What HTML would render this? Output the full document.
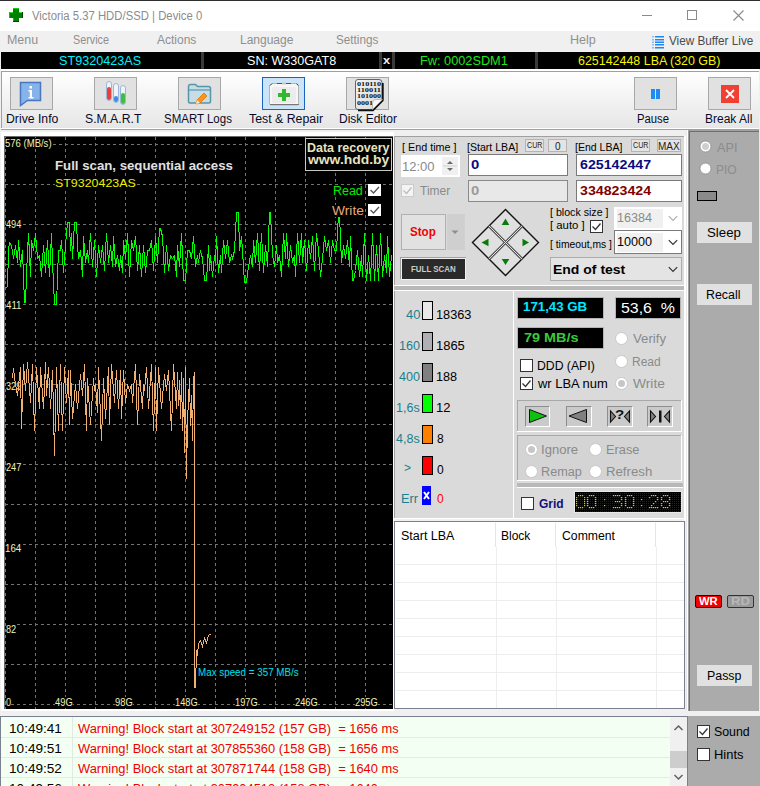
<!DOCTYPE html>
<html><head><meta charset="utf-8"><title>Victoria</title>
<style>
html,body{margin:0;padding:0;width:760px;height:786px;overflow:hidden;background:#f0f0f0;}
.a{position:absolute;}
.t{white-space:pre;transform-origin:0 0;font-family:"Liberation Sans",sans-serif;}
svg.a{overflow:visible}
</style></head><body>
<div class='a' style='left:0px;top:0px;width:760px;height:1px;background:#2e2e2e;'></div>
<div class='a' style='left:0px;top:1px;width:760px;height:30px;background:#ffffff;'></div>
<svg class='a' style='left:9px;top:8px' width='14' height='14' shape-rendering='crispEdges'><rect x='4' y='0' width='6' height='14' fill='#008000'/><rect x='0' y='4' width='14' height='6' fill='#008000'/><rect x='4' y='0' width='6' height='1' fill='#10d010'/><rect x='0' y='4' width='4' height='1' fill='#30e030'/><rect x='10' y='4' width='4' height='1' fill='#30e030'/><rect x='0' y='4' width='1' height='6' fill='#10c010'/><rect x='4' y='10' width='1' height='4' fill='#10c010'/><rect x='4' y='13' width='6' height='1' fill='#004000'/><rect x='13' y='4' width='1' height='6' fill='#004000'/></svg>
<div class='a t' style='left:32.00px;top:10px;font:normal normal 12px/1 "Liberation Sans", sans-serif;color:#8c8c8c;transform:scaleX(0.9444);'>Victoria 5.37 HDD/SSD | Device 0</div>
<div class='a' style='left:642px;top:15px;width:10px;height:1px;background:#8a8a8a;'></div>
<div class='a' style='left:687px;top:10px;width:10px;height:10px;box-sizing:border-box;border:1px solid #8a8a8a;'></div>
<svg class='a' style='left:733px;top:10px' width='11' height='11'><path d='M0.5 0.5L10.5 10.5M10.5 0.5L0.5 10.5' stroke='#8a8a8a' stroke-width='1.1'/></svg>
<div class='a' style='left:0px;top:31px;width:760px;height:21px;background:#f0f0f0;'></div>
<div class='a t' style='left:6.96px;top:34px;font:normal normal 12px/1 "Liberation Sans", sans-serif;color:#8f8f8f;transform:scaleX(1.0357);'>Menu</div>
<div class='a t' style='left:73.10px;top:34px;font:normal normal 12px/1 "Liberation Sans", sans-serif;color:#8f8f8f;transform:scaleX(0.8974);'>Service</div>
<div class='a t' style='left:157.00px;top:34px;font:normal normal 12px/1 "Liberation Sans", sans-serif;color:#8f8f8f;'>Actions</div>
<div class='a t' style='left:240.00px;top:34px;font:normal normal 12px/1 "Liberation Sans", sans-serif;color:#8f8f8f;'>Language</div>
<div class='a t' style='left:336.02px;top:34px;font:normal normal 12px/1 "Liberation Sans", sans-serif;color:#8f8f8f;transform:scaleX(0.9762);'>Settings</div>
<div class='a t' style='left:569.96px;top:34px;font:normal normal 12px/1 "Liberation Sans", sans-serif;color:#8f8f8f;transform:scaleX(1.0435);'>Help</div>
<svg class='a' style='left:652px;top:36px' width='12' height='12'><rect x='0' y='0' width='2' height='1.5' fill='#7fbfff'/><rect x='3' y='0' width='9' height='1.5' fill='#1e88f0'/><rect x='0' y='3' width='2' height='1.5' fill='#7fbfff'/><rect x='3' y='3' width='9' height='1.5' fill='#1e88f0'/><rect x='0' y='5.5' width='2' height='1.5' fill='#7fbfff'/><rect x='3' y='5.5' width='9' height='1.5' fill='#1e88f0'/><rect x='0' y='8' width='2' height='1.5' fill='#7fbfff'/><rect x='3' y='8' width='9' height='1.5' fill='#1e88f0'/><rect x='0' y='11' width='2' height='1.5' fill='#7fbfff'/><rect x='3' y='11' width='9' height='1.5' fill='#1e88f0'/></svg>
<div class='a t' style='left:669.00px;top:35px;font:normal normal 12px/1 "Liberation Sans", sans-serif;color:#4a4a4a;transform:scaleX(0.9767);'>View Buffer Live</div>
<div class='a' style='left:0px;top:52px;width:760px;height:17px;background:#f0f0f0;'></div>
<div class='a' style='left:1px;top:52px;width:759px;height:17px;background:#000;'></div>
<div class='a' style='left:201px;top:52px;width:3px;height:17px;background:#3a3a3a;'></div>
<div class='a' style='left:379px;top:52px;width:3px;height:17px;background:#3a3a3a;'></div>
<div class='a' style='left:392px;top:52px;width:3px;height:17px;background:#3a3a3a;'></div>
<div class='a' style='left:535px;top:52px;width:3px;height:17px;background:#3a3a3a;'></div>
<div class='a t' style='left:58.95px;top:55px;font:normal normal 12px/1 "Liberation Sans", sans-serif;color:#00f0ff;transform:scaleX(1.0519);'>ST9320423AS</div>
<div class='a t' style='left:246.95px;top:55px;font:normal normal 12px/1 "Liberation Sans", sans-serif;color:#ffffff;transform:scaleX(1.0476);'>SN: W330GAT8</div>
<div class='a t' style='left:383.00px;top:55px;font:normal bold 11px/1 "Liberation Sans", sans-serif;color:#f0f0f0;transform:scaleX(1.1667);'>x</div>
<div class='a t' style='left:419.94px;top:55px;font:normal normal 12px/1 "Liberation Sans", sans-serif;color:#1ee81e;transform:scaleX(1.0617);'>Fw: 0002SDM1</div>
<div class='a t' style='left:578.00px;top:55px;font:normal normal 12px/1 "Liberation Sans", sans-serif;color:#f5f500;transform:scaleX(1.0365);'>625142448 LBA (320 GB)</div>
<div class='a' style='left:0px;top:69px;width:760px;height:63px;background:#f0f0f0;'></div>
<div class='a' style='left:1px;top:69px;width:758px;height:2px;background:#ffffff;'></div>
<div class='a' style='left:1px;top:71px;width:758px;height:1px;background:#a0a0a0;'></div>
<div class='a' style='left:1px;top:72px;width:1px;height:56px;background:#a0a0a0;'></div>
<div class='a' style='left:2px;top:72px;width:757px;height:56px;background:linear-gradient(#ffffff,#e6e6e6)'></div>
<div class='a' style='left:1px;top:128px;width:758px;height:1px;background:#ffffff;'></div>
<div class='a' style='left:1px;top:129px;width:758px;height:1px;background:#a0a0a0;'></div>
<div class='a' style='left:10px;top:77px;width:43px;height:33px;background:#e1e1e1;box-sizing:border-box;border:1px solid #a8a8a8;'></div>
<div class='a t' style='left:5.98px;top:113px;font:normal normal 12px/1 "Liberation Sans", sans-serif;color:#0a0a28;transform:scaleX(1.0200);'>Drive Info</div>
<div class='a' style='left:94px;top:77px;width:43px;height:33px;background:#e1e1e1;box-sizing:border-box;border:1px solid #a8a8a8;'></div>
<div class='a t' style='left:84.98px;top:113px;font:normal normal 12px/1 "Liberation Sans", sans-serif;color:#0a0a28;transform:scaleX(1.0185);'>S.M.A.R.T</div>
<div class='a' style='left:178px;top:77px;width:43px;height:33px;background:#e1e1e1;box-sizing:border-box;border:1px solid #a8a8a8;'></div>
<div class='a t' style='left:164.04px;top:113px;font:normal normal 12px/1 "Liberation Sans", sans-serif;color:#0a0a28;transform:scaleX(0.9571);'>SMART Logs</div>
<div class='a' style='left:262px;top:77px;width:43px;height:33px;background:#cce4f7;box-sizing:border-box;border:1.5px solid #1a64c0;'></div>
<div class='a t' style='left:249.00px;top:113px;font:normal normal 12px/1 "Liberation Sans", sans-serif;color:#0a0a28;transform:scaleX(1.0278);'>Test &amp; Repair</div>
<div class='a' style='left:346px;top:77px;width:43px;height:33px;background:#e1e1e1;box-sizing:border-box;border:1px solid #a8a8a8;'></div>
<div class='a t' style='left:339.00px;top:113px;font:normal normal 12px/1 "Liberation Sans", sans-serif;color:#0a0a28;'>Disk Editor</div>
<div class='a' style='left:634px;top:77px;width:43px;height:33px;background:#e1e1e1;box-sizing:border-box;border:1px solid #a8a8a8;'></div>
<div class='a t' style='left:637.06px;top:113px;font:normal normal 12px/1 "Liberation Sans", sans-serif;color:#0a0a28;transform:scaleX(0.9394);'>Pause</div>
<div class='a' style='left:708px;top:77px;width:43px;height:33px;background:#e1e1e1;box-sizing:border-box;border:1px solid #a8a8a8;'></div>
<div class='a t' style='left:705.00px;top:113px;font:normal normal 12px/1 "Liberation Sans", sans-serif;color:#0a0a28;'>Break All</div>
<svg class='a' style='left:19px;top:81px' width='24' height='26'><path d='M1.5 1.5h20v18h-13l-7 5z' fill='#86b3ea' stroke='#4a78c0' stroke-width='1.5'/><rect x='10.5' y='5' width='2.5' height='2.5' fill='#fff'/><path d='M9.5 9h3.5v7h1.5v1.5h-5v-1.5h1.3v-5.5h-1.3z' fill='#fff'/></svg>
<svg class='a' style='left:105px;top:81px' width='23' height='26'><rect x='1.5' y='0.5' width='5' height='19' rx='2.5' fill='#eef4fb' stroke='#9bb7d6' stroke-width='1'/><rect x='2' y='6' width='4' height='13' rx='2' fill='#e84040'/><rect x='8.5' y='2.5' width='5' height='19' rx='2.5' fill='#eef4fb' stroke='#9bb7d6' stroke-width='1'/><rect x='9' y='15' width='4' height='6' rx='2' fill='#3c8ee8'/><rect x='15.5' y='4.5' width='5' height='19' rx='2.5' fill='#eef4fb' stroke='#9bb7d6' stroke-width='1'/><rect x='16' y='12' width='4' height='11' rx='2' fill='#3cc040'/></svg>
<svg class='a' style='left:187px;top:83px' width='26' height='23'><path d='M1.5 3.5q0-2 2-2h5l2 2h11q2 0 2 2v13q0 1.5-1.5 1.5h-19q-1.5 0-1.5-1.5z' fill='#c6dde6' stroke='#5795ad' stroke-width='1.5'/><path d='M1.5 7h22' stroke='#5795ad' stroke-width='1.2'/><path d='M17 10l3 3-7 7-4 1 1-4z' fill='#f7931e' stroke='#e07800' stroke-width='0.8'/><path d='M10 17l3 3-4 1z' fill='#e8e8e8'/></svg>
<svg class='a' style='left:268px;top:81px' width='33' height='27'><path d='M4 2.5h24l2.5 2.5v17.5q0 1.5-1.5 1.5h-26q-1.5 0-1.5-1.5v-17.5z' fill='#f6f6f6' stroke='#b4b4b4' stroke-width='1'/><path d='M2 4.5l2-2M30.5 4.5l-2-2' stroke='#444' stroke-width='1'/><path d='M9 2.5h5M18 2.5h5' stroke='#555' stroke-width='1.2'/><rect x='14' y='1.5' width='4' height='2' fill='#c8c8c8'/><rect x='4' y='6' width='24' height='16' rx='1.5' fill='#ececec'/><path d='M2 23.5h29' stroke='#777' stroke-width='1'/><path d='M14 8h4v4h4v4h-4v4h-4v-4h-4v-4h4z' fill='#30b830'/></svg>
<svg class='a' style='left:354px;top:78px' width='32' height='33'><defs><linearGradient id='dg' x1='0' y1='0' x2='1' y2='1'><stop offset='0' stop-color='#f6f6f6'/><stop offset='1' stop-color='#d6d6d6'/></linearGradient></defs><path d='M4 1.5h21q3 0 3 3v17.5l-9.5 9.5h-14.5q-2.5 0-2.5-2.5v-25q0-2.5 2.5-2.5z' fill='url(#dg)' stroke='#5a6478' stroke-width='1'/><path d='M28.8 5v17.5l-9.8 9.8h-15' fill='none' stroke='#111' stroke-width='1.8'/><text x='3' y='7.8' font-family='Liberation Serif' font-weight='bold' font-size='7' fill='#111' textLength='24' lengthAdjust='spacingAndGlyphs'>010110</text><text x='3' y='14.1' font-family='Liberation Serif' font-weight='bold' font-size='7' fill='#111' textLength='24' lengthAdjust='spacingAndGlyphs'>110011</text><text x='3' y='20.4' font-family='Liberation Serif' font-weight='bold' font-size='7' fill='#111' textLength='24' lengthAdjust='spacingAndGlyphs'>101000</text><text x='3' y='26.7' font-family='Liberation Serif' font-weight='bold' font-size='7' fill='#111' textLength='16' lengthAdjust='spacingAndGlyphs'>0001</text><path d='M18.5 31.5v-6.5q0-3.5 3.5-3.5h6.5z' fill='#f8f8f8' stroke='#9a9a9a' stroke-width='0.6'/></svg>
<div class='a' style='left:651px;top:89px;width:4px;height:10px;background:#1e8cf0;'></div>
<div class='a' style='left:656px;top:89px;width:4px;height:10px;background:#1e8cf0;'></div>
<div class='a' style='left:721px;top:85px;width:18px;height:18px;background:#f04034;'></div>
<svg class='a' style='left:721px;top:85px' width='18' height='18'><path d='M5 5L13 13M13 5L5 13' stroke='#fff' stroke-width='1.8'/></svg>
<div class='a' style='left:0px;top:130px;width:760px;height:586px;background:#f0f0f0;'></div>
<div class='a' style='left:1px;top:132px;width:393px;height:579px;background:#ffffff;'></div>
<div class='a' style='left:4px;top:136px;width:389px;height:1px;background:#6a6a6a;'></div>
<div class='a' style='left:4px;top:136px;width:1px;height:573px;background:#6a6a6a;'></div>
<div class='a' style='left:5px;top:137px;width:388px;height:572px;background:#000;'></div>
<svg class='a' style='left:0;top:0' width='393' height='709'><line x1='5' y1='144.5' x2='393' y2='144.5' stroke='#727272' stroke-width='1' stroke-dasharray='3 3'/><line x1='5' y1='184.5' x2='393' y2='184.5' stroke='#727272' stroke-width='1' stroke-dasharray='3 3'/><line x1='5' y1='224.5' x2='393' y2='224.5' stroke='#727272' stroke-width='1' stroke-dasharray='3 3'/><line x1='5' y1='264.5' x2='393' y2='264.5' stroke='#727272' stroke-width='1' stroke-dasharray='3 3'/><line x1='5' y1='304.5' x2='393' y2='304.5' stroke='#727272' stroke-width='1' stroke-dasharray='3 3'/><line x1='5' y1='344.5' x2='393' y2='344.5' stroke='#727272' stroke-width='1' stroke-dasharray='3 3'/><line x1='5' y1='384.5' x2='393' y2='384.5' stroke='#727272' stroke-width='1' stroke-dasharray='3 3'/><line x1='5' y1='424.5' x2='393' y2='424.5' stroke='#727272' stroke-width='1' stroke-dasharray='3 3'/><line x1='5' y1='464.5' x2='393' y2='464.5' stroke='#727272' stroke-width='1' stroke-dasharray='3 3'/><line x1='5' y1='504.5' x2='393' y2='504.5' stroke='#727272' stroke-width='1' stroke-dasharray='3 3'/><line x1='5' y1='544.5' x2='393' y2='544.5' stroke='#727272' stroke-width='1' stroke-dasharray='3 3'/><line x1='5' y1='584.5' x2='393' y2='584.5' stroke='#727272' stroke-width='1' stroke-dasharray='3 3'/><line x1='5' y1='624.5' x2='393' y2='624.5' stroke='#727272' stroke-width='1' stroke-dasharray='3 3'/><line x1='5' y1='664.5' x2='393' y2='664.5' stroke='#727272' stroke-width='1' stroke-dasharray='3 3'/><line x1='5' y1='704.5' x2='393' y2='704.5' stroke='#727272' stroke-width='1' stroke-dasharray='3 3'/><line x1='5.5' y1='137' x2='5.5' y2='709' stroke='#727272' stroke-width='1' stroke-dasharray='3 3'/><line x1='35.5' y1='137' x2='35.5' y2='709' stroke='#727272' stroke-width='1' stroke-dasharray='3 3'/><line x1='65.5' y1='137' x2='65.5' y2='709' stroke='#727272' stroke-width='1' stroke-dasharray='3 3'/><line x1='95.5' y1='137' x2='95.5' y2='709' stroke='#727272' stroke-width='1' stroke-dasharray='3 3'/><line x1='125.5' y1='137' x2='125.5' y2='709' stroke='#727272' stroke-width='1' stroke-dasharray='3 3'/><line x1='155.5' y1='137' x2='155.5' y2='709' stroke='#727272' stroke-width='1' stroke-dasharray='3 3'/><line x1='185.5' y1='137' x2='185.5' y2='709' stroke='#727272' stroke-width='1' stroke-dasharray='3 3'/><line x1='215.5' y1='137' x2='215.5' y2='709' stroke='#727272' stroke-width='1' stroke-dasharray='3 3'/><line x1='245.5' y1='137' x2='245.5' y2='709' stroke='#727272' stroke-width='1' stroke-dasharray='3 3'/><line x1='275.5' y1='137' x2='275.5' y2='709' stroke='#727272' stroke-width='1' stroke-dasharray='3 3'/><line x1='305.5' y1='137' x2='305.5' y2='709' stroke='#727272' stroke-width='1' stroke-dasharray='3 3'/><line x1='335.5' y1='137' x2='335.5' y2='709' stroke='#727272' stroke-width='1' stroke-dasharray='3 3'/><line x1='365.5' y1='137' x2='365.5' y2='709' stroke='#727272' stroke-width='1' stroke-dasharray='3 3'/></svg>
<div class='a t' style='left:5.13px;top:138px;font:normal normal 11px/1 "Liberation Sans", sans-serif;color:#f0f0b8;transform:scaleX(0.8654);background:#000;'>576 (MB/s)</div>
<div class='a t' style='left:6.00px;top:219px;font:normal normal 11px/1 "Liberation Sans", sans-serif;color:#f0f0b8;transform:scaleX(0.8333);background:#000;'>494</div>
<div class='a t' style='left:6.00px;top:300px;font:normal normal 11px/1 "Liberation Sans", sans-serif;color:#f0f0b8;transform:scaleX(0.8824);background:#000;'>411</div>
<div class='a t' style='left:6.00px;top:381px;font:normal normal 11px/1 "Liberation Sans", sans-serif;color:#f0f0b8;transform:scaleX(0.8333);background:#000;'>329</div>
<div class='a t' style='left:6.00px;top:462px;font:normal normal 11px/1 "Liberation Sans", sans-serif;color:#f0f0b8;transform:scaleX(0.8333);background:#000;'>247</div>
<div class='a t' style='left:5.12px;top:543px;font:normal normal 11px/1 "Liberation Sans", sans-serif;color:#f0f0b8;transform:scaleX(0.8824);background:#000;'>164</div>
<div class='a t' style='left:6.00px;top:624px;font:normal normal 11px/1 "Liberation Sans", sans-serif;color:#f0f0b8;transform:scaleX(0.8333);background:#000;'>82</div>
<svg class='a' style='left:0;top:0' width='393' height='709'><polyline shape-rendering='crispEdges' fill='none' stroke='#00ff00' stroke-width='1' points='5.5,288.5 7.5,286.5 8.5,250.5 9.5,242.5 11.5,245.5 13.5,258.5 15.5,245.5 17.5,262.5 18.5,240.5 20.5,266.5 22.5,250.5 24.5,302.5 25.5,302.5 27.5,250.5 28.5,233.5 30.5,276.5 31.5,240.5 33.5,250.5 35.5,233.5 37.5,258.5 39.5,255.5 41.5,276.5 43.5,245.5 45.5,272.5 47.5,240.5 49.5,276.5 51.5,233.5 52.5,262.5 54.5,304.5 56.5,304.5 58.5,250.5 60.5,250.5 61.5,240.5 63.5,272.5 65.5,245.5 67.5,222.5 69.5,222.5 70.5,250.5 71.5,233.5 72.5,258.5 74.5,222.5 76.5,222.5 77.5,245.5 78.5,258.5 80.5,250.5 82.5,276.5 83.5,236.5 85.5,262.5 87.5,250.5 88.5,262.5 90.5,233.5 92.5,266.5 94.5,240.5 96.5,276.5 98.5,245.5 100.5,262.5 102.5,245.5 104.5,270.5 106.5,233.5 108.5,262.5 110.5,245.5 112.5,266.5 113.5,236.5 115.5,266.5 117.5,255.5 119.5,270.5 120.5,255.5 122.5,272.5 123.5,240.5 125.5,258.5 127.5,233.5 129.5,276.5 131.5,240.5 133.5,250.5 135.5,236.5 137.5,270.5 139.5,245.5 141.5,276.5 143.5,245.5 145.5,272.5 147.5,250.5 149.5,250.5 151.5,240.5 153.5,270.5 155.5,236.5 157.5,262.5 159.5,228.5 160.5,228.5 162.5,236.5 164.5,272.5 166.5,245.5 168.5,270.5 170.5,255.5 172.5,258.5 174.5,255.5 176.5,276.5 177.5,245.5 179.5,266.5 181.5,233.5 183.5,280.5 185.5,280.5 187.5,250.5 189.5,250.5 191.5,258.5 193.5,236.5 195.5,266.5 197.5,255.5 198.5,262.5 200.5,250.5 202.5,258.5 204.5,280.5 206.5,280.5 208.5,245.5 209.5,270.5 210.5,255.5 212.5,276.5 214.5,255.5 215.5,262.5 216.5,236.5 218.5,272.5 220.5,255.5 221.5,272.5 223.5,240.5 225.5,258.5 227.5,240.5 229.5,262.5 231.5,255.5 232.5,258.5 234.5,250.5 236.5,212.5 238.5,212.5 239.5,250.5 241.5,236.5 243.5,266.5 244.5,282.5 245.5,282.5 246.5,282.5 248.5,266.5 250.5,255.5 252.5,266.5 253.5,240.5 255.5,262.5 257.5,233.5 259.5,270.5 261.5,233.5 263.5,272.5 265.5,245.5 267.5,266.5 269.5,212.5 270.5,212.5 272.5,255.5 274.5,266.5 276.5,245.5 277.5,262.5 279.5,255.5 281.5,276.5 283.5,233.5 285.5,258.5 286.5,233.5 288.5,266.5 290.5,245.5 292.5,262.5 294.5,255.5 295.5,276.5 297.5,233.5 299.5,262.5 301.5,233.5 302.5,262.5 304.5,240.5 306.5,270.5 308.5,240.5 310.5,258.5 312.5,236.5 314.5,270.5 316.5,233.5 318.5,250.5 320.5,276.5 322.5,258.5 324.5,236.5 326.5,250.5 328.5,240.5 330.5,262.5 332.5,240.5 334.5,250.5 336.5,250.5 338.5,214.5 339.5,214.5 341.5,262.5 343.5,245.5 345.5,258.5 347.5,240.5 349.5,266.5 350.5,236.5 352.5,280.5 353.5,280.5 355.5,270.5 357.5,250.5 359.5,276.5 361.5,255.5 362.5,276.5 364.5,233.5 366.5,280.5 368.5,255.5 370.5,280.5 372.5,233.5 374.5,280.5 376.5,245.5 378.5,280.5 380.5,233.5 382.5,276.5 384.5,255.5 386.5,272.5 387.5,236.5 389.5,276.5 391.5,255.5'/><polyline shape-rendering='crispEdges' fill='none' stroke='#f0b070' stroke-width='1' points='12.5,378.5 13.5,368.5 15.5,384.5 17.5,395.5 20.5,367.5 21.5,428.5 23.5,364.5 25.5,390.5 27.5,362.5 30.5,402.5 32.5,364.5 34.5,430.5 36.5,367.5 39.5,408.5 40.5,367.5 43.5,408.5 45.5,362.5 46.5,395.5 48.5,367.5 50.5,408.5 52.5,370.5 54.5,455.5 56.5,367.5 58.5,430.5 60.5,364.5 62.5,430.5 64.5,367.5 66.5,402.5 68.5,370.5 69.5,424.5 70.5,370.5 72.5,418.5 75.5,384.5 77.5,408.5 80.5,374.5 82.5,395.5 84.5,364.5 86.5,430.5 87.5,378.5 90.5,424.5 93.5,378.5 94.5,390.5 95.5,384.5 97.5,412.5 98.5,367.5 101.5,440.5 103.5,378.5 105.5,418.5 108.5,367.5 109.5,424.5 111.5,364.5 114.5,402.5 116.5,370.5 118.5,408.5 120.5,370.5 121.5,418.5 123.5,370.5 125.5,402.5 127.5,384.5 129.5,390.5 131.5,384.5 132.5,402.5 135.5,364.5 137.5,424.5 139.5,374.5 142.5,408.5 143.5,384.5 144.5,390.5 146.5,367.5 148.5,408.5 151.5,364.5 153.5,430.5 155.5,367.5 156.5,430.5 158.5,367.5 161.5,408.5 164.5,374.5 166.5,390.5 168.5,370.5 171.5,430.5 173.5,364.5 176.5,408.5 177.5,372.5 178.5,405.5 179.5,380.5 180.5,418.5 181.5,372.5 182.5,430.5 183.5,378.5 184.5,452.5 185.5,367.5 186.5,478.5 187.5,420.5 188.5,400.5 189.5,378.5 190.5,425.5 191.5,395.5 192.5,440.5 193.5,380.5 194.5,372.5 194.5,687.5 195.5,687.5 196.5,650.5 197.5,655.5 198.5,643.5 200.5,640.5 202.5,646.5 204.5,638.5 206.5,642.5 208.5,635.5 211.5,633.5'/></svg>
<div class='a t' style='left:6.00px;top:697px;font:normal normal 11px/1 "Liberation Sans", sans-serif;color:#f0f0b8;transform:scaleX(0.8333);background:#000;'>0</div>
<div class='a t' style='left:55.00px;top:697px;font:normal normal 11px/1 "Liberation Sans", sans-serif;color:#f0f0b8;transform:scaleX(0.8500);background:#000;'>49G</div>
<div class='a t' style='left:115.00px;top:697px;font:normal normal 11px/1 "Liberation Sans", sans-serif;color:#f0f0b8;transform:scaleX(0.8500);background:#000;'>98G</div>
<div class='a t' style='left:175.16px;top:697px;font:normal normal 11px/1 "Liberation Sans", sans-serif;color:#f0f0b8;transform:scaleX(0.8400);background:#000;'>148G</div>
<div class='a t' style='left:235.16px;top:697px;font:normal normal 11px/1 "Liberation Sans", sans-serif;color:#f0f0b8;transform:scaleX(0.8400);background:#000;'>197G</div>
<div class='a t' style='left:295.00px;top:697px;font:normal normal 11px/1 "Liberation Sans", sans-serif;color:#f0f0b8;transform:scaleX(0.8462);background:#000;'>246G</div>
<div class='a t' style='left:355.00px;top:697px;font:normal normal 11px/1 "Liberation Sans", sans-serif;color:#f0f0b8;transform:scaleX(0.8462);background:#000;'>295G</div>
<div class='a t' style='left:54.98px;top:159px;font:normal bold 13px/1 "Liberation Sans", sans-serif;color:#e0e0e0;transform:scaleX(1.0172);background:#000;'>Full scan, sequential access</div>
<div class='a t' style='left:54.87px;top:178px;font:normal normal 11px/1 "Liberation Sans", sans-serif;color:#f0f000;transform:scaleX(1.1286);background:#000;'>ST9320423AS</div>
<div class='a' style='left:305px;top:138px;width:87px;height:33px;background:#000;box-sizing:border-box;border:1px solid #c8c8c0;'></div>
<div class='a t' style='left:306.96px;top:142px;font:normal bold 12px/1 "Liberation Sans", sans-serif;color:#e6e2c0;transform:scaleX(1.0385);'>Data recovery</div>
<div class='a t' style='left:308.00px;top:154px;font:normal bold 12px/1 "Liberation Sans", sans-serif;color:#e6e2c0;transform:scaleX(1.1571);'>www.hdd.by</div>
<div class='a t' style='left:332.96px;top:185px;font:normal normal 12px/1 "Liberation Sans", sans-serif;color:#00ee00;transform:scaleX(1.0370);background:#000;'>Read</div>
<div class='a t' style='left:332.00px;top:205px;font:normal normal 12px/1 "Liberation Sans", sans-serif;color:#e8a878;transform:scaleX(1.1481);background:#000;'>Write</div>
<div class='a' style='left:368px;top:184px;width:13px;height:12px;background:#ffffff;'></div>
<svg class='a' style='left:368px;top:184px' width='13' height='12'><path d='M2.5 6l3 3 5.5-6' fill='none' stroke='#555' stroke-width='1.3'/></svg>
<div class='a' style='left:368px;top:204px;width:13px;height:12px;background:#ffffff;'></div>
<svg class='a' style='left:368px;top:204px' width='13' height='12'><path d='M2.5 6l3 3 5.5-6' fill='none' stroke='#555' stroke-width='1.3'/></svg>
<div class='a t' style='left:198.11px;top:667px;font:normal normal 11px/1 "Liberation Sans", sans-serif;color:#00e0e8;transform:scaleX(0.8929);background:#000;'>Max speed = 357 MB/s</div>
<div class='a' style='left:394px;top:136px;width:291px;height:150px;background:#dadada;'></div>
<div class='a' style='left:394px;top:136px;width:291px;height:1px;background:#a0a0a0;'></div>
<div class='a' style='left:394px;top:136px;width:1px;height:150px;background:#a0a0a0;'></div>
<div class='a' style='left:394px;top:285px;width:291px;height:1px;background:#ffffff;'></div>
<div class='a' style='left:684px;top:136px;width:1px;height:150px;background:#ffffff;'></div>
<div class='a' style='left:394px;top:286px;width:291px;height:4px;background:#b8b8b8;'></div>
<div class='a' style='left:394px;top:290px;width:291px;height:228px;background:#dadada;'></div>
<div class='a' style='left:394px;top:290px;width:291px;height:1px;background:#ffffff;'></div>
<div class='a' style='left:394px;top:291px;width:1px;height:227px;background:#a0a0a0;'></div>
<div class='a' style='left:513px;top:291px;width:1px;height:227px;background:#ffffff;'></div>
<div class='a' style='left:394px;top:518px;width:291px;height:1px;background:#ffffff;'></div>
<div class='a' style='left:394px;top:519px;width:291px;height:2px;background:#f0f0f0;'></div>
<div class='a' style='left:684px;top:136px;width:2px;height:385px;background:#ffffff;'></div>
<div class='a' style='left:686px;top:131px;width:1px;height:580px;background:#e8e8e8;'></div>
<div class='a' style='left:687px;top:130px;width:1px;height:581px;background:#ffffff;'></div>
<div class='a t' style='left:402.02px;top:142px;font:normal normal 11px/1 "Liberation Sans", sans-serif;color:#000;transform:scaleX(0.9815);'>[ End time ]</div>
<div class='a' style='left:401px;top:155px;width:59px;height:22px;background:#ffffff;'></div>
<div class='a t' style='left:402.00px;top:160px;font:normal normal 13px/1 "Liberation Sans", sans-serif;color:#8a8a8a;'>12:00</div>
<div class='a' style='left:442px;top:157px;width:16px;height:18px;background:#f0f0f0;'></div>
<svg class='a' style='left:442px;top:157px' width='16' height='18'><path d='M5 7l3-3 3 3z' fill='#6a6a6a'/><path d='M5 11l3 3 3-3z' fill='#6a6a6a'/><line x1='1' y1='9' x2='15' y2='9' stroke='#d0d0d0'/></svg>
<div class='a' style='left:401px;top:184px;width:13px;height:13px;background:#f4f4f4;box-sizing:border-box;border:1px solid #cccccc;'></div>
<svg class='a' style='left:401px;top:184px' width='13' height='13'><path d='M2.5 6.5l3 3 5-6' fill='none' stroke='#bdbdbd' stroke-width='1.3'/></svg>
<div class='a t' style='left:420.00px;top:185px;font:normal normal 12px/1 "Liberation Sans", sans-serif;color:#8a8a8a;'>Timer</div>
<div class='a t' style='left:467.04px;top:142px;font:normal normal 11px/1 "Liberation Sans", sans-serif;color:#000;transform:scaleX(0.9615);'>[Start LBA]</div>
<div class='a' style='left:525px;top:139px;width:19px;height:13px;background:#e4e4e4;box-sizing:border-box;border:1px solid #b4b4b4;'></div>
<div class='a' style='left:548px;top:139px;width:19px;height:13px;background:#e4e4e4;box-sizing:border-box;border:1px solid #b4b4b4;'></div>
<div class='a' style='left:631px;top:139px;width:19px;height:13px;background:#e4e4e4;box-sizing:border-box;border:1px solid #b4b4b4;'></div>
<div class='a' style='left:657px;top:139px;width:24px;height:13px;background:#e4e4e4;box-sizing:border-box;border:1px solid #b4b4b4;'></div>
<div class='a t' style='left:527.00px;top:141px;font:normal normal 9px/1 "Liberation Sans", sans-serif;color:#222;transform:scaleX(0.7895);'>CUR</div>
<div class='a t' style='left:555.00px;top:142px;font:normal normal 10px/1 "Liberation Sans", sans-serif;color:#222;'>0</div>
<div class='a t' style='left:633.00px;top:141px;font:normal normal 9px/1 "Liberation Sans", sans-serif;color:#222;transform:scaleX(0.7895);'>CUR</div>
<div class='a t' style='left:658.00px;top:142px;font:normal normal 10px/1 "Liberation Sans", sans-serif;color:#222;'>MAX</div>
<div class='a t' style='left:575.04px;top:142px;font:normal normal 11px/1 "Liberation Sans", sans-serif;color:#000;transform:scaleX(0.9583);'>[End LBA]</div>
<div class='a' style='left:468px;top:154px;width:100px;height:22px;background:#ffffff;box-sizing:border-box;border:1px solid #7a7a7a;'></div>
<div class='a t' style='left:471.00px;top:158px;font:normal bold 13px/1 "Liberation Sans", sans-serif;color:#0a0a80;transform:scaleX(1.1429);'>0</div>
<div class='a' style='left:468px;top:180px;width:100px;height:22px;background:#e8e8e8;box-sizing:border-box;border:1px solid #8a8a8a;'></div>
<div class='a t' style='left:471.00px;top:184px;font:normal bold 13px/1 "Liberation Sans", sans-serif;color:#9a9a9a;transform:scaleX(1.1429);'>0</div>
<div class='a' style='left:576px;top:154px;width:106px;height:22px;background:#ffffff;box-sizing:border-box;border:1px solid #7a7a7a;'></div>
<div class='a t' style='left:580.00px;top:159px;font:normal bold 12px/1 "Liberation Sans", sans-serif;color:#0a0a80;transform:scaleX(1.1833);'>625142447</div>
<div class='a' style='left:576px;top:180px;width:106px;height:22px;background:#ffffff;box-sizing:border-box;border:1px solid #7a7a7a;'></div>
<div class='a t' style='left:580.00px;top:185px;font:normal bold 12px/1 "Liberation Sans", sans-serif;color:#800000;transform:scaleX(1.1833);'>334823424</div>
<div class='a' style='left:401px;top:214px;width:45px;height:36px;background:#e1e1e1;box-sizing:border-box;border:1px solid #b0b0b0;'></div>
<div class='a t' style='left:410.11px;top:225px;font:normal bold 13px/1 "Liberation Sans", sans-serif;color:#f00000;transform:scaleX(0.8929);'>Stop</div>
<div class='a' style='left:447px;top:214px;width:18px;height:36px;background:#cfcfcf;box-sizing:border-box;border:1px solid #d0d0d0;'></div>
<svg class='a' style='left:450px;top:229px' width='10' height='6'><path d='M1.5 1.5h7l-3.5 3.5z' fill='#8e8e8e'/></svg>
<div class='a' style='left:401px;top:258px;width:65px;height:22px;background:#2a2a2a;box-sizing:border-box;border:1px solid #f0f0f0;'></div>
<div class='a' style='left:400px;top:257px;width:66px;height:1px;background:#a0a0a0;'></div>
<div class='a' style='left:400px;top:257px;width:1px;height:22px;background:#a0a0a0;'></div>
<div class='a t' style='left:411.00px;top:265px;font:normal bold 9px/1 "Liberation Sans", sans-serif;color:#cccccc;transform:scaleX(0.8800);'>FULL SCAN</div>
<svg class='a' style='left:470px;top:207px' width='72' height='72'><polygon points='35.5,2.5 68.5,35.5 35.5,68.5 2.5,35.5' fill='#e0e0e0' stroke='#111' stroke-width='1.4'/><line x1='19.0' y1='19.0' x2='52.0' y2='52.0' stroke='#555' stroke-width='3'/><line x1='52.0' y1='19.0' x2='19.0' y2='52.0' stroke='#555' stroke-width='3'/><line x1='19.0' y1='19.0' x2='52.0' y2='52.0' stroke='#e0e0e0' stroke-width='1'/><line x1='52.0' y1='19.0' x2='19.0' y2='52.0' stroke='#e0e0e0' stroke-width='1'/><path d='M31.7,18.0 L35.5,11.5 L39.3,18.0z' fill='#0a7a0a'/><path d='M31.7,52.0 L35.5,58.0 L39.3,52.0z' fill='#0a7a0a'/><path d='M18.5,31.7 L11.5,35.5 L18.5,39.3z' fill='#0a7a0a'/><path d='M52.5,31.7 L59.0,35.5 L52.5,39.3z' fill='#0a7a0a'/></svg>
<div class='a t' style='left:550.03px;top:207px;font:normal normal 11px/1 "Liberation Sans", sans-serif;color:#000;transform:scaleX(0.9661);'>[ block size ]</div>
<div class='a t' style='left:549.97px;top:220px;font:normal normal 11px/1 "Liberation Sans", sans-serif;color:#000;transform:scaleX(1.0312);'>[ auto ]</div>
<div class='a' style='left:590px;top:220px;width:13px;height:13px;background:#ffffff;box-sizing:border-box;border:1px solid #333;'></div>
<svg class='a' style='left:590px;top:220px' width='13' height='13'><path d='M2.5 6.5l3 3 5-6' fill='none' stroke='#333' stroke-width='1.3'/></svg>
<div class='a t' style='left:550.06px;top:239px;font:normal normal 11px/1 "Liberation Sans", sans-serif;color:#000;transform:scaleX(0.9385);'>[ timeout,ms ]</div>
<div class='a' style='left:614px;top:207px;width:68px;height:23px;background:#ffffff;'></div>
<div class='a' style='left:617px;top:209px;width:46px;height:19px;background:#f0f0f0;'></div>
<div class='a t' style='left:617.03px;top:211px;font:normal normal 13px/1 "Liberation Sans", sans-serif;color:#8a8a8a;transform:scaleX(0.9714);'>16384</div>
<svg class='a' style='left:668px;top:215px' width='10' height='7'><path d='M0.8 1.2l4.2 4.2 4.2-4.2' fill='none' stroke='#b0b0b0' stroke-width='1.2'/></svg>
<div class='a' style='left:614px;top:230px;width:68px;height:24px;background:#ffffff;box-sizing:border-box;border:1px solid #7a7a7a;'></div>
<div class='a' style='left:617px;top:233px;width:46px;height:19px;background:#f0f0f0;'></div>
<div class='a t' style='left:617.03px;top:235px;font:normal normal 13px/1 "Liberation Sans", sans-serif;color:#000;transform:scaleX(0.9714);'>10000</div>
<svg class='a' style='left:668px;top:239px' width='10' height='7'><path d='M0.8 1.2l4.2 4.2 4.2-4.2' fill='none' stroke='#333' stroke-width='1.2'/></svg>
<div class='a' style='left:550px;top:257px;width:132px;height:24px;background:#e4e4e4;box-sizing:border-box;border:1px solid #adadad;'></div>
<div class='a t' style='left:552.92px;top:263px;font:normal bold 13px/1 "Liberation Sans", sans-serif;color:#000;transform:scaleX(1.0758);'>End of test</div>
<svg class='a' style='left:668px;top:266px' width='10' height='7'><path d='M0.8 1.2l4.2 4.2 4.2-4.2' fill='none' stroke='#333' stroke-width='1.2'/></svg>
<div class='a' style='left:422px;top:301px;width:11px;height:19px;background:#e8e8e8;box-sizing:border-box;border:1.5px solid #000;'></div>
<div class='a t' style='left:406.00px;top:309px;font:normal normal 12px/1 "Liberation Sans", sans-serif;color:#1a7f8c;transform:scaleX(1.0769);'>40</div>
<div class='a t' style='left:435.94px;top:309px;font:normal normal 12px/1 "Liberation Sans", sans-serif;color:#000;transform:scaleX(1.0625);'>18363</div>
<div class='a' style='left:422px;top:332px;width:11px;height:19px;background:#b0b0b4;box-sizing:border-box;border:1.5px solid #000;'></div>
<div class='a t' style='left:398.95px;top:340px;font:normal normal 12px/1 "Liberation Sans", sans-serif;color:#1a7f8c;transform:scaleX(1.0526);'>160</div>
<div class='a t' style='left:435.92px;top:340px;font:normal normal 12px/1 "Liberation Sans", sans-serif;color:#000;transform:scaleX(1.0800);'>1865</div>
<div class='a' style='left:422px;top:363px;width:11px;height:19px;background:#808080;box-sizing:border-box;border:1.5px solid #000;'></div>
<div class='a t' style='left:399.00px;top:371px;font:normal normal 12px/1 "Liberation Sans", sans-serif;color:#1a7f8c;transform:scaleX(1.0500);'>400</div>
<div class='a t' style='left:435.95px;top:371px;font:normal normal 12px/1 "Liberation Sans", sans-serif;color:#000;transform:scaleX(1.0526);'>188</div>
<div class='a' style='left:422px;top:394px;width:11px;height:19px;background:#00ff00;box-sizing:border-box;border:1.5px solid #000;'></div>
<div class='a t' style='left:395.95px;top:402px;font:normal normal 12px/1 "Liberation Sans", sans-serif;color:#1a7f8c;transform:scaleX(1.0455);'>1,6s</div>
<div class='a t' style='left:435.92px;top:402px;font:normal normal 12px/1 "Liberation Sans", sans-serif;color:#000;transform:scaleX(1.0833);'>12</div>
<div class='a' style='left:422px;top:425px;width:11px;height:19px;background:#ff8000;box-sizing:border-box;border:1.5px solid #000;'></div>
<div class='a t' style='left:396.00px;top:433px;font:normal normal 12px/1 "Liberation Sans", sans-serif;color:#1a7f8c;transform:scaleX(1.0435);'>4,8s</div>
<div class='a t' style='left:437.00px;top:433px;font:normal normal 12px/1 "Liberation Sans", sans-serif;color:#000;'>8</div>
<div class='a' style='left:422px;top:456px;width:11px;height:19px;background:#ff0000;box-sizing:border-box;border:1.5px solid #000;'></div>
<div class='a t' style='left:404.00px;top:462px;font:normal normal 12px/1 "Liberation Sans", sans-serif;color:#1a7f8c;'>></div>
<div class='a t' style='left:437.00px;top:464px;font:normal normal 12px/1 "Liberation Sans", sans-serif;color:#000;'>0</div>
<div class='a' style='left:422px;top:486px;width:9px;height:19px;background:#0000ff;'></div>
<div class='a t' style='left:400.93px;top:493px;font:normal normal 12px/1 "Liberation Sans", sans-serif;color:#1a7f8c;transform:scaleX(1.0667);'>Err</div>
<div class='a t' style='left:437.00px;top:493px;font:normal normal 12px/1 "Liberation Sans", sans-serif;color:#ff0000;'>0</div>
<svg class='a' style='left:422px;top:486px' width='9' height='18'><path d='M2 6l5 7M7 6l-5 7' stroke='#fff' stroke-width='2'/></svg>
<div class='a' style='left:517px;top:297px;width:87px;height:22px;background:#000;box-sizing:border-box;border:1px solid #b4b4b4;'></div>
<div class='a' style='left:615px;top:297px;width:66px;height:22px;background:#000;box-sizing:border-box;border:1px solid #b4b4b4;'></div>
<div class='a' style='left:517px;top:327px;width:87px;height:22px;background:#000;box-sizing:border-box;border:1px solid #b4b4b4;'></div>
<div class='a t' style='left:522.89px;top:301px;font:normal bold 12px/1 "Liberation Sans", sans-serif;color:#00e8ff;transform:scaleX(1.1053);'>171,43 GB</div>
<div class='a t' style='left:620.94px;top:300px;font:normal normal 15px/1 "Liberation Sans", sans-serif;color:#ffffff;transform:scaleX(1.0600);'>53,6  %</div>
<div class='a t' style='left:524.00px;top:332px;font:normal bold 12px/1 "Liberation Sans", sans-serif;color:#3cc83c;transform:scaleX(1.2000);'>79 MB/s</div>
<svg class='a' style='left:615px;top:332px' width='13' height='13'><circle cx='6.5' cy='6.5' r='6' fill='#ffffff' stroke='#c8c8c8' stroke-width='1'/></svg>
<div class='a t' style='left:633.00px;top:333px;font:normal normal 12px/1 "Liberation Sans", sans-serif;color:#8a8a8a;transform:scaleX(1.1000);'>Verify</div>
<svg class='a' style='left:615px;top:355px' width='13' height='13'><circle cx='6.5' cy='6.5' r='6' fill='#ffffff' stroke='#c8c8c8' stroke-width='1'/></svg>
<div class='a t' style='left:632.00px;top:356px;font:normal normal 12px/1 "Liberation Sans", sans-serif;color:#8a8a8a;'>Read</div>
<svg class='a' style='left:615px;top:377px' width='13' height='13'><circle cx='6.5' cy='6.5' r='6' fill='#ffffff' stroke='#c8c8c8' stroke-width='1'/><circle cx='6.5' cy='6.5' r='3.5' fill='#c6c6c6'/></svg>
<div class='a t' style='left:633.00px;top:378px;font:normal normal 12px/1 "Liberation Sans", sans-serif;color:#8a8a8a;transform:scaleX(1.1481);'>Write</div>
<div class='a' style='left:520px;top:359px;width:13px;height:13px;background:#ffffff;box-sizing:border-box;border:1px solid #333;'></div>
<div class='a t' style='left:536.98px;top:360px;font:normal normal 12px/1 "Liberation Sans", sans-serif;color:#000;transform:scaleX(1.0182);'>DDD (API)</div>
<div class='a' style='left:520px;top:377px;width:13px;height:13px;background:#ffffff;box-sizing:border-box;border:1px solid #333;'></div>
<svg class='a' style='left:520px;top:377px' width='13' height='13'><path d='M2.5 6.5l3 3 5-6' fill='none' stroke='#333' stroke-width='1.3'/></svg>
<div class='a t' style='left:538.00px;top:378px;font:normal normal 12px/1 "Liberation Sans", sans-serif;color:#000;transform:scaleX(1.0781);'>wr LBA num</div>
<div class='a' style='left:517px;top:400px;width:165px;height:32px;background:#d4d4d4;'></div>
<div class='a' style='left:517px;top:400px;width:165px;height:1px;background:#a8a8a8;'></div>
<div class='a' style='left:517px;top:400px;width:1px;height:32px;background:#a8a8a8;'></div>
<div class='a' style='left:517px;top:431px;width:165px;height:1px;background:#ffffff;'></div>
<div class='a' style='left:681px;top:400px;width:1px;height:32px;background:#ffffff;'></div>
<div class='a' style='left:525px;top:406px;width:25px;height:21px;background:#cacaca;box-sizing:border-box;border-style:solid;border-width:1px;border-color:#8e8e8e #ffffff #ffffff #8e8e8e;'></div>
<div class='a' style='left:566px;top:406px;width:26px;height:21px;background:#cacaca;box-sizing:border-box;border-style:solid;border-width:1px;border-color:#8e8e8e #ffffff #ffffff #8e8e8e;'></div>
<div class='a' style='left:607px;top:406px;width:26px;height:21px;background:#cacaca;box-sizing:border-box;border-style:solid;border-width:1px;border-color:#8e8e8e #ffffff #ffffff #8e8e8e;'></div>
<div class='a' style='left:647px;top:406px;width:26px;height:21px;background:#cacaca;box-sizing:border-box;border-style:solid;border-width:1px;border-color:#8e8e8e #ffffff #ffffff #8e8e8e;'></div>
<svg class='a' style='left:525px;top:406px' width='25' height='21'><path d='M4.5 3.5v13l17-6.5z' fill='#10c010' stroke='#111' stroke-width='1'/></svg>
<svg class='a' style='left:566px;top:406px' width='26' height='21'><path d='M20.5 3.5v13l-17.5-6.5z' fill='#808080' stroke='#111' stroke-width='1'/></svg>
<svg class='a' style='left:607px;top:406px' width='26' height='21'><path d='M3.5 5v11l5-5.5z' fill='#808080' stroke='#111' stroke-width='1.1'/><path d='M22.5 5v11l-5-5.5z' fill='#808080' stroke='#111' stroke-width='1.1'/></svg>
<div class='a t' style='left:614.83px;top:408px;font:normal bold 13px/1 "Liberation Sans", sans-serif;color:#111;transform:scaleX(1.1667);'>?</div>
<svg class='a' style='left:647px;top:406px' width='26' height='21'><path d='M3.5 5v11l5-5.5z' fill='#808080' stroke='#111' stroke-width='1.1'/><path d='M22.5 5v11l-5-5.5z' fill='#808080' stroke='#111' stroke-width='1.1'/><rect x='12' y='4.5' width='2.5' height='12' fill='#111'/></svg>
<div class='a' style='left:517px;top:435px;width:165px;height:46px;background:#d4d4d4;'></div>
<div class='a' style='left:517px;top:435px;width:165px;height:1px;background:#a8a8a8;'></div>
<div class='a' style='left:517px;top:435px;width:1px;height:46px;background:#a8a8a8;'></div>
<div class='a' style='left:517px;top:480px;width:165px;height:1px;background:#ffffff;'></div>
<div class='a' style='left:681px;top:435px;width:1px;height:46px;background:#ffffff;'></div>
<svg class='a' style='left:525px;top:443px' width='13' height='13'><circle cx='6.5' cy='6.5' r='6' fill='#ffffff' stroke='#c8c8c8' stroke-width='1'/><circle cx='6.5' cy='6.5' r='3.5' fill='#c6c6c6'/></svg>
<div class='a t' style='left:540.91px;top:444px;font:normal normal 12px/1 "Liberation Sans", sans-serif;color:#8a8a8a;transform:scaleX(1.0909);'>Ignore</div>
<svg class='a' style='left:589px;top:443px' width='13' height='13'><circle cx='6.5' cy='6.5' r='6' fill='#ffffff' stroke='#c8c8c8' stroke-width='1'/></svg>
<div class='a t' style='left:605.93px;top:444px;font:normal normal 12px/1 "Liberation Sans", sans-serif;color:#8a8a8a;transform:scaleX(1.0667);'>Erase</div>
<svg class='a' style='left:525px;top:465px' width='13' height='13'><circle cx='6.5' cy='6.5' r='6' fill='#ffffff' stroke='#c8c8c8' stroke-width='1'/></svg>
<div class='a t' style='left:540.95px;top:466px;font:normal normal 12px/1 "Liberation Sans", sans-serif;color:#8a8a8a;transform:scaleX(1.0541);'>Remap</div>
<svg class='a' style='left:589px;top:465px' width='13' height='13'><circle cx='6.5' cy='6.5' r='6' fill='#ffffff' stroke='#c8c8c8' stroke-width='1'/></svg>
<div class='a t' style='left:605.90px;top:466px;font:normal normal 12px/1 "Liberation Sans", sans-serif;color:#8a8a8a;transform:scaleX(1.1000);'>Refresh</div>
<div class='a' style='left:517px;top:483px;width:166px;height:4px;background:#b8b8b8;'></div>
<div class='a' style='left:517px;top:487px;width:166px;height:1px;background:#ffffff;'></div>
<div class='a' style='left:521px;top:497px;width:13px;height:13px;background:#ffffff;box-sizing:border-box;border:1px solid #333;'></div>
<div class='a t' style='left:539.00px;top:498px;font:normal bold 12px/1 "Liberation Sans", sans-serif;color:#101080;'>Grid</div>
<div class='a' style='left:574px;top:491px;width:108px;height:22px;background:#e8e8e8;'></div>
<div class='a' style='left:575px;top:492px;width:106px;height:20px;background:#000;'></div>
<svg class='a' style='left:575px;top:492px' width='106' height='20'><defs><pattern id='lcdp' width='2' height='2' patternUnits='userSpaceOnUse' x='1' y='1'><rect x='0' y='0' width='1' height='1' fill='#0c300c'/></pattern></defs><rect x='0' y='0' width='106' height='20' fill='url(#lcdp)'/><rect x='3' y='3' width='1.2' height='1.2' fill='#e0cc00'/><rect x='5' y='3' width='1.2' height='1.2' fill='#e0cc00'/><rect x='7' y='3' width='1.2' height='1.2' fill='#e0cc00'/><rect x='1' y='5' width='1.2' height='1.2' fill='#e0cc00'/><rect x='9' y='5' width='1.2' height='1.2' fill='#e0cc00'/><rect x='1' y='7' width='1.2' height='1.2' fill='#e0cc00'/><rect x='9' y='7' width='1.2' height='1.2' fill='#e0cc00'/><rect x='1' y='9' width='1.2' height='1.2' fill='#e0cc00'/><rect x='9' y='9' width='1.2' height='1.2' fill='#e0cc00'/><rect x='1' y='11' width='1.2' height='1.2' fill='#e0cc00'/><rect x='9' y='11' width='1.2' height='1.2' fill='#e0cc00'/><rect x='1' y='13' width='1.2' height='1.2' fill='#e0cc00'/><rect x='9' y='13' width='1.2' height='1.2' fill='#e0cc00'/><rect x='3' y='15' width='1.2' height='1.2' fill='#e0cc00'/><rect x='5' y='15' width='1.2' height='1.2' fill='#e0cc00'/><rect x='7' y='15' width='1.2' height='1.2' fill='#e0cc00'/><rect x='14' y='3' width='1.2' height='1.2' fill='#e0cc00'/><rect x='16' y='3' width='1.2' height='1.2' fill='#e0cc00'/><rect x='18' y='3' width='1.2' height='1.2' fill='#e0cc00'/><rect x='12' y='5' width='1.2' height='1.2' fill='#e0cc00'/><rect x='20' y='5' width='1.2' height='1.2' fill='#e0cc00'/><rect x='12' y='7' width='1.2' height='1.2' fill='#e0cc00'/><rect x='20' y='7' width='1.2' height='1.2' fill='#e0cc00'/><rect x='12' y='9' width='1.2' height='1.2' fill='#e0cc00'/><rect x='20' y='9' width='1.2' height='1.2' fill='#e0cc00'/><rect x='12' y='11' width='1.2' height='1.2' fill='#e0cc00'/><rect x='20' y='11' width='1.2' height='1.2' fill='#e0cc00'/><rect x='12' y='13' width='1.2' height='1.2' fill='#e0cc00'/><rect x='20' y='13' width='1.2' height='1.2' fill='#e0cc00'/><rect x='14' y='15' width='1.2' height='1.2' fill='#e0cc00'/><rect x='16' y='15' width='1.2' height='1.2' fill='#e0cc00'/><rect x='18' y='15' width='1.2' height='1.2' fill='#e0cc00'/><rect x='29' y='7' width='1.2' height='1.2' fill='#e0cc00'/><rect x='29' y='13' width='1.2' height='1.2' fill='#e0cc00'/><rect x='38' y='3' width='1.2' height='1.2' fill='#e0cc00'/><rect x='40' y='3' width='1.2' height='1.2' fill='#e0cc00'/><rect x='42' y='3' width='1.2' height='1.2' fill='#e0cc00'/><rect x='44' y='3' width='1.2' height='1.2' fill='#e0cc00'/><rect x='46' y='5' width='1.2' height='1.2' fill='#e0cc00'/><rect x='46' y='7' width='1.2' height='1.2' fill='#e0cc00'/><rect x='40' y='9' width='1.2' height='1.2' fill='#e0cc00'/><rect x='42' y='9' width='1.2' height='1.2' fill='#e0cc00'/><rect x='44' y='9' width='1.2' height='1.2' fill='#e0cc00'/><rect x='46' y='11' width='1.2' height='1.2' fill='#e0cc00'/><rect x='46' y='13' width='1.2' height='1.2' fill='#e0cc00'/><rect x='38' y='15' width='1.2' height='1.2' fill='#e0cc00'/><rect x='40' y='15' width='1.2' height='1.2' fill='#e0cc00'/><rect x='42' y='15' width='1.2' height='1.2' fill='#e0cc00'/><rect x='44' y='15' width='1.2' height='1.2' fill='#e0cc00'/><rect x='52' y='3' width='1.2' height='1.2' fill='#e0cc00'/><rect x='54' y='3' width='1.2' height='1.2' fill='#e0cc00'/><rect x='56' y='3' width='1.2' height='1.2' fill='#e0cc00'/><rect x='50' y='5' width='1.2' height='1.2' fill='#e0cc00'/><rect x='58' y='5' width='1.2' height='1.2' fill='#e0cc00'/><rect x='50' y='7' width='1.2' height='1.2' fill='#e0cc00'/><rect x='58' y='7' width='1.2' height='1.2' fill='#e0cc00'/><rect x='50' y='9' width='1.2' height='1.2' fill='#e0cc00'/><rect x='58' y='9' width='1.2' height='1.2' fill='#e0cc00'/><rect x='50' y='11' width='1.2' height='1.2' fill='#e0cc00'/><rect x='58' y='11' width='1.2' height='1.2' fill='#e0cc00'/><rect x='50' y='13' width='1.2' height='1.2' fill='#e0cc00'/><rect x='58' y='13' width='1.2' height='1.2' fill='#e0cc00'/><rect x='52' y='15' width='1.2' height='1.2' fill='#e0cc00'/><rect x='54' y='15' width='1.2' height='1.2' fill='#e0cc00'/><rect x='56' y='15' width='1.2' height='1.2' fill='#e0cc00'/><rect x='66' y='7' width='1.2' height='1.2' fill='#e0cc00'/><rect x='66' y='13' width='1.2' height='1.2' fill='#e0cc00'/><rect x='76' y='3' width='1.2' height='1.2' fill='#e0cc00'/><rect x='78' y='3' width='1.2' height='1.2' fill='#e0cc00'/><rect x='80' y='3' width='1.2' height='1.2' fill='#e0cc00'/><rect x='74' y='5' width='1.2' height='1.2' fill='#e0cc00'/><rect x='82' y='5' width='1.2' height='1.2' fill='#e0cc00'/><rect x='82' y='7' width='1.2' height='1.2' fill='#e0cc00'/><rect x='80' y='9' width='1.2' height='1.2' fill='#e0cc00'/><rect x='78' y='11' width='1.2' height='1.2' fill='#e0cc00'/><rect x='76' y='13' width='1.2' height='1.2' fill='#e0cc00'/><rect x='74' y='15' width='1.2' height='1.2' fill='#e0cc00'/><rect x='76' y='15' width='1.2' height='1.2' fill='#e0cc00'/><rect x='78' y='15' width='1.2' height='1.2' fill='#e0cc00'/><rect x='80' y='15' width='1.2' height='1.2' fill='#e0cc00'/><rect x='82' y='15' width='1.2' height='1.2' fill='#e0cc00'/><rect x='88' y='3' width='1.2' height='1.2' fill='#e0cc00'/><rect x='90' y='3' width='1.2' height='1.2' fill='#e0cc00'/><rect x='92' y='3' width='1.2' height='1.2' fill='#e0cc00'/><rect x='86' y='5' width='1.2' height='1.2' fill='#e0cc00'/><rect x='94' y='5' width='1.2' height='1.2' fill='#e0cc00'/><rect x='86' y='7' width='1.2' height='1.2' fill='#e0cc00'/><rect x='94' y='7' width='1.2' height='1.2' fill='#e0cc00'/><rect x='88' y='9' width='1.2' height='1.2' fill='#e0cc00'/><rect x='90' y='9' width='1.2' height='1.2' fill='#e0cc00'/><rect x='92' y='9' width='1.2' height='1.2' fill='#e0cc00'/><rect x='86' y='11' width='1.2' height='1.2' fill='#e0cc00'/><rect x='94' y='11' width='1.2' height='1.2' fill='#e0cc00'/><rect x='86' y='13' width='1.2' height='1.2' fill='#e0cc00'/><rect x='94' y='13' width='1.2' height='1.2' fill='#e0cc00'/><rect x='88' y='15' width='1.2' height='1.2' fill='#e0cc00'/><rect x='90' y='15' width='1.2' height='1.2' fill='#e0cc00'/><rect x='92' y='15' width='1.2' height='1.2' fill='#e0cc00'/></svg>
<div class='a' style='left:394px;top:521px;width:291px;height:188px;background:#ffffff;box-sizing:border-box;border:1px solid #7a8090;'></div>
<div class='a t' style='left:400.96px;top:530px;font:normal normal 12px/1 "Liberation Sans", sans-serif;color:#000;transform:scaleX(1.0400);'>Start LBA</div>
<div class='a t' style='left:501.00px;top:530px;font:normal normal 12px/1 "Liberation Sans", sans-serif;color:#000;'>Block</div>
<div class='a t' style='left:562.00px;top:530px;font:normal normal 12px/1 "Liberation Sans", sans-serif;color:#000;transform:scaleX(1.0192);'>Comment</div>
<div class='a' style='left:495px;top:523px;width:1px;height:24px;background:#e4e4e4;'></div>
<div class='a' style='left:555px;top:523px;width:1px;height:24px;background:#e4e4e4;'></div>
<div class='a' style='left:655px;top:523px;width:1px;height:24px;background:#e4e4e4;'></div>
<div class='a' style='left:496px;top:547px;width:1px;height:161px;background:#eeeeee;'></div>
<div class='a' style='left:556px;top:547px;width:1px;height:161px;background:#eeeeee;'></div>
<div class='a' style='left:656px;top:547px;width:1px;height:161px;background:#eeeeee;'></div>
<div class='a' style='left:396px;top:564px;width:288px;height:1px;background:#ededed;'></div>
<div class='a' style='left:396px;top:582px;width:288px;height:1px;background:#ededed;'></div>
<div class='a' style='left:396px;top:600px;width:288px;height:1px;background:#ededed;'></div>
<div class='a' style='left:396px;top:618px;width:288px;height:1px;background:#ededed;'></div>
<div class='a' style='left:396px;top:636px;width:288px;height:1px;background:#ededed;'></div>
<div class='a' style='left:396px;top:654px;width:288px;height:1px;background:#ededed;'></div>
<div class='a' style='left:396px;top:672px;width:288px;height:1px;background:#ededed;'></div>
<div class='a' style='left:396px;top:690px;width:288px;height:1px;background:#ededed;'></div>
<div class='a' style='left:688px;top:129px;width:72px;height:582px;background:#ababab;'></div>
<div class='a' style='left:688px;top:129px;width:71px;height:2px;background:#a0a0a0;'></div>
<div class='a' style='left:688px;top:129px;width:1px;height:582px;background:#a0a0a0;'></div>
<div class='a' style='left:689px;top:131px;width:70px;height:1px;background:#6e6e6e;'></div>
<div class='a' style='left:689px;top:131px;width:1px;height:580px;background:#6e6e6e;'></div>
<div class='a' style='left:759px;top:129px;width:1px;height:582px;background:#e8e8e8;'></div>
<div class='a' style='left:688px;top:711px;width:72px;height:1px;background:#ffffff;'></div>
<svg class='a' style='left:699px;top:140px' width='13' height='13'><circle cx='6.5' cy='6.5' r='5.5' fill='#fff' stroke='#8a8a8a' stroke-width='0.8'/><circle cx='6.5' cy='6.5' r='3.5' fill='#cfcfcf'/></svg>
<svg class='a' style='left:699px;top:162px' width='13' height='13'><circle cx='6.5' cy='6.5' r='5.5' fill='#fff' stroke='#8a8a8a' stroke-width='0.8'/></svg>
<div class='a t' style='left:717.00px;top:142px;font:normal normal 12px/1 "Liberation Sans", sans-serif;color:#8c8c8c;transform:scaleX(1.0556);'>API</div>
<div class='a t' style='left:716.00px;top:164px;font:normal normal 12px/1 "Liberation Sans", sans-serif;color:#8c8c8c;'>PIO</div>
<div class='a' style='left:697px;top:191px;width:20px;height:10px;background:#8a8a8a;box-sizing:border-box;border:1.5px solid #000;'></div>
<div class='a' style='left:697px;top:222px;width:55px;height:21px;background:#e1e1e1;'></div>
<div class='a t' style='left:706.90px;top:227px;font:normal normal 12px/1 "Liberation Sans", sans-serif;color:#000;transform:scaleX(1.1034);'>Sleep</div>
<div class='a' style='left:697px;top:284px;width:55px;height:21px;background:#e1e1e1;'></div>
<div class='a t' style='left:705.97px;top:289px;font:normal normal 12px/1 "Liberation Sans", sans-serif;color:#000;transform:scaleX(1.0312);'>Recall</div>
<div class='a' style='left:697px;top:665px;width:55px;height:21px;background:#e1e1e1;'></div>
<div class='a t' style='left:706.97px;top:670px;font:normal normal 12px/1 "Liberation Sans", sans-serif;color:#000;transform:scaleX(1.0312);'>Passp</div>
<div class='a' style='left:695px;top:595px;width:27px;height:13px;background:#f00000;box-sizing:border-box;border:1px solid #111;border-radius:2px;'></div>
<div class='a t' style='left:699.00px;top:597px;font:normal bold 10px/1 "Liberation Sans", sans-serif;color:#ffffff;transform:scaleX(1.1250);'>WR</div>
<div class='a' style='left:727px;top:595px;width:27px;height:13px;background:#9a9a9a;box-sizing:border-box;border:1px solid #333;border-radius:2px;'></div>
<div class='a t' style='left:730.69px;top:597px;font:normal bold 10px/1 "Liberation Sans", sans-serif;color:#b8b8b8;transform:scaleX(1.3077);'>RD</div>
<div class='a' style='left:0px;top:711px;width:760px;height:5px;background:#f0f0f0;'></div>
<div class='a' style='left:0px;top:716px;width:688px;height:70px;background:#f2fff2;'></div>
<div class='a' style='left:0px;top:716px;width:688px;height:1px;background:#7a8090;'></div>
<div class='a' style='left:0px;top:716px;width:1px;height:70px;background:#7a8090;'></div>
<div class='a' style='left:687px;top:716px;width:1px;height:70px;background:#7a8090;'></div>
<div class='a' style='left:72px;top:717px;width:1px;height:69px;background:#e0eae0;'></div>
<div class='a' style='left:1px;top:737px;width:669px;height:1px;background:#e2ece2;'></div>
<div class='a' style='left:1px;top:757px;width:669px;height:1px;background:#e2ece2;'></div>
<div class='a' style='left:1px;top:777px;width:669px;height:1px;background:#e2ece2;'></div>
<div class='a t' style='left:8.87px;top:723px;font:normal normal 12px/1 "Liberation Sans", sans-serif;color:#000;transform:scaleX(1.1333);'>10:49:41</div>
<div class='a t' style='left:78.00px;top:723px;font:normal normal 12px/1 "Liberation Sans", sans-serif;color:#f00000;transform:scaleX(1.0736);'>Warning! Block start at 307249152 (157 GB)  = 1656 ms</div>
<div class='a t' style='left:8.87px;top:743px;font:normal normal 12px/1 "Liberation Sans", sans-serif;color:#000;transform:scaleX(1.1333);'>10:49:51</div>
<div class='a t' style='left:78.00px;top:743px;font:normal normal 12px/1 "Liberation Sans", sans-serif;color:#f00000;transform:scaleX(1.0736);'>Warning! Block start at 307855360 (158 GB)  = 1656 ms</div>
<div class='a t' style='left:8.87px;top:763px;font:normal normal 12px/1 "Liberation Sans", sans-serif;color:#000;transform:scaleX(1.1333);'>10:49:52</div>
<div class='a t' style='left:78.00px;top:763px;font:normal normal 12px/1 "Liberation Sans", sans-serif;color:#f00000;transform:scaleX(1.0736);'>Warning! Block start at 307871744 (158 GB)  = 1640 ms</div>
<div class='a t' style='left:8.87px;top:783px;font:normal normal 12px/1 "Liberation Sans", sans-serif;color:#000;transform:scaleX(1.1333);'>10:49:56</div>
<div class='a t' style='left:78.00px;top:783px;font:normal normal 12px/1 "Liberation Sans", sans-serif;color:#f00000;transform:scaleX(1.0736);'>Warning! Block start at 307904512 (158 GB)  = 1640 ms</div>
<div class='a' style='left:670px;top:717px;width:17px;height:69px;background:#f0f0f0;'></div>
<div class='a' style='left:670px;top:751px;width:17px;height:17px;background:#cdcdcd;'></div>
<svg class='a' style='left:670px;top:722px' width='17' height='12'><path d='M4.5 8l4-4 4 4' fill='none' stroke='#606060' stroke-width='1.5'/></svg>
<svg class='a' style='left:670px;top:771px' width='17' height='12'><path d='M4.5 4l4 4 4-4' fill='none' stroke='#606060' stroke-width='1.5'/></svg>
<div class='a' style='left:688px;top:716px;width:72px;height:70px;background:#ababab;'></div>
<div class='a' style='left:697px;top:725px;width:13px;height:13px;background:#ffffff;box-sizing:border-box;border:1px solid #333;'></div>
<svg class='a' style='left:697px;top:725px' width='13' height='13'><path d='M2.5 6.5l3 3 5-6' fill='none' stroke='#333' stroke-width='1.3'/></svg>
<div class='a t' style='left:713.97px;top:726px;font:normal normal 12px/1 "Liberation Sans", sans-serif;color:#000;transform:scaleX(1.0303);'>Sound</div>
<div class='a' style='left:697px;top:748px;width:13px;height:13px;background:#ffffff;box-sizing:border-box;border:1px solid #333;'></div>
<div class='a t' style='left:713.92px;top:749px;font:normal normal 12px/1 "Liberation Sans", sans-serif;color:#000;transform:scaleX(1.0769);'>Hints</div>
</body></html>
